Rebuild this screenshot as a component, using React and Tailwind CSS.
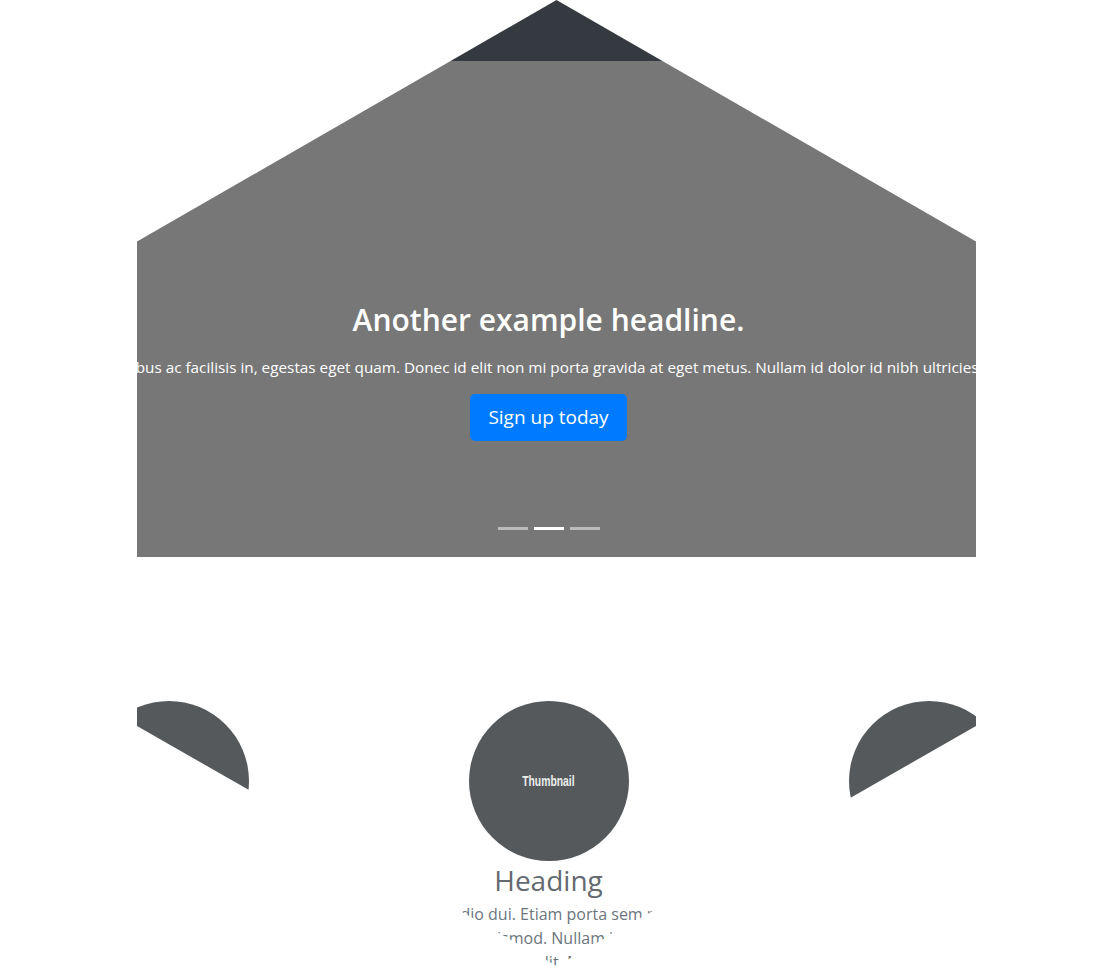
import React from "react";

const font = { fontFamily: '"Open Sans", "Noto Sans", sans-serif' };

function Thumb() {
  return (
    <div className="w-[160px] h-[160px] shrink-0 rounded-full bg-[#55595c] flex items-center justify-center">
      <span
        className="text-[#eceeef] text-[14px] font-bold leading-none scale-x-[0.74] inline-block"
        style={{ fontFamily: '"Liberation Sans", Arial, sans-serif' }}
      >
        Thumbnail
      </span>
    </div>
  );
}

function Col() {
  return (
    <div className="w-[380px] shrink-0 px-[15px] flex flex-col items-center text-center">
      <Thumb />
      <h2 className="text-[28px] leading-[38px] font-medium text-[#646a70] mb-[3px]">Heading</h2>
      <div className="flex flex-col items-center text-[16px] leading-[24px] text-[#6c757d] whitespace-nowrap">
        <span>Donec sed odio dui. Etiam porta sem malesuada</span>
        <span>magna mollis euismod. Nullam id dolor id nibh</span>
        <span>ultricies vehicula ut id elit. Morbi leo risus, porta</span>
        <span>ac consectetur ac, vestibulum at eros. Praesent</span>
        <span>commodo cursus magna.</span>
      </div>
    </div>
  );
}

export default function App() {
  return (
    <div className="w-full h-[966px] bg-white overflow-hidden" style={font}>
      <div className="w-[1097px] h-[966px] [clip-path:polygon(556.5px_0,976px_241.5px,976px_726px,556.5px_966px,137px_726px,137px_241.5px)]">
        <div className="h-[61px] bg-[#343a40]" />
        <div className="h-[496px] bg-[#777777] flex flex-col items-center pt-[240px] text-white">
          <h1 className="text-[30px] leading-[38px] font-semibold">Another example headline.</h1>
          <p className="mt-[16px] text-[15.3px] leading-[24px] whitespace-nowrap">
            Cras justo odio, dapibus ac facilisis in, egestas eget quam. Donec id elit non mi porta gravida at eget metus. Nullam id dolor id nibh ultricies vehicula ut id elit.
          </p>
          <button className="mt-[15px] h-[47px] px-[18px] rounded-[5px] bg-[#007bff] text-white text-[19px] flex items-center">
            Sign up today
          </button>
          <div className="mt-[86px] flex gap-[6px]">
            <span className="w-[30px] h-[3px] bg-white/50" />
            <span className="w-[30px] h-[3px] bg-white" />
            <span className="w-[30px] h-[3px] bg-white/50" />
          </div>
        </div>
        <div className="mt-[144px] flex justify-center">
          <Col />
          <Col />
          <Col />
        </div>
      </div>
    </div>
  );
}
